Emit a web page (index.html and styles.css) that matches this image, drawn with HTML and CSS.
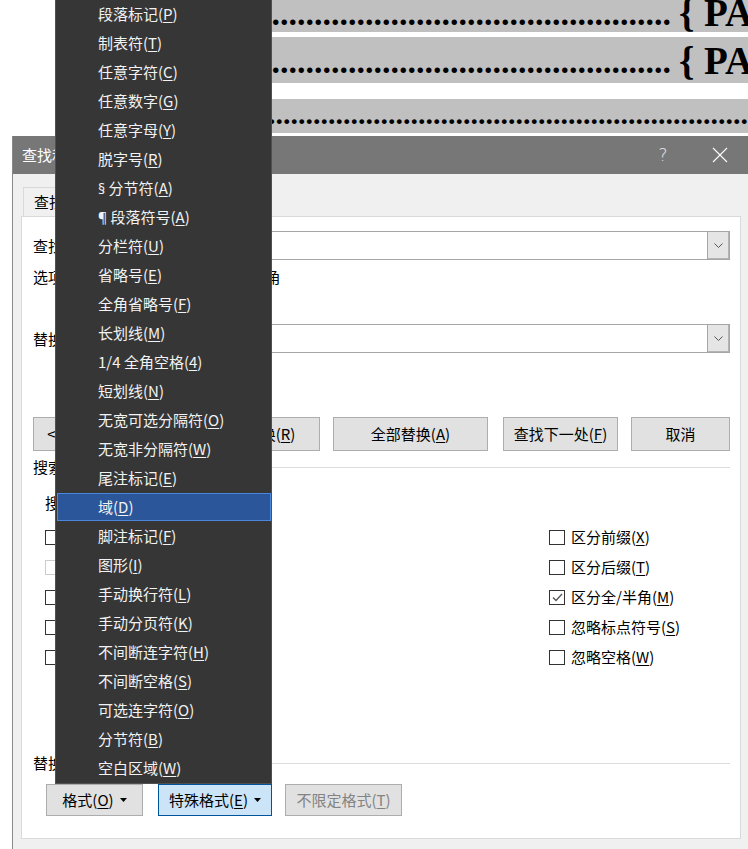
FILE: index.html
```html
<!DOCTYPE html>
<html lang="zh-CN">
<head>
<meta charset="utf-8">
<title>查找和替换</title>
<link rel="stylesheet" href="styles.css">
</head>
<body>
<div class="doc">
  <div class="toc toc1"><span class="leader">..................................................................................................................................</span><span class="tail">{ PAGEREF _Toc }</span></div>
  <div class="toc toc2"><span class="leader">..................................................................................................................................</span><span class="tail">{ PAGEREF _Toc }</span></div>
  <div class="toc toc3"><span class="leader">..................................................................................................................................</span></div>
</div>

<div class="dialog">
  <div class="titlebar">
    <span class="title">查找和替换</span>
    <span class="help">?</span>
    <span class="close"><svg width="16" height="16" viewBox="0 0 16 16"><path d="M1 1 L15 15 M15 1 L1 15" stroke="#fff" stroke-width="1.1" fill="none"/></svg></span>
  </div>
  <div class="body">
    <div class="tabs">
      <div class="tab">查找(<u>D</u>)</div>
      <div class="tab sel">替换(<u>P</u>)</div>
      <div class="tab">定位(<u>G</u>)</div>
    </div>
    <div class="panel">
      <div class="frow find">
        <span class="flabel">查找内容(<u>N</u>):</span>
        <div class="combo"><div class="drop"><svg width="9" height="5" viewBox="0 0 9 5"><polyline points="0.5,0.5 4.5,4.5 8.5,0.5" stroke="#555" fill="none"/></svg></div></div>
      </div>
      <div class="opts"><span class="flabel">选项:</span><span>向下搜索, 区分全/半角</span></div>
      <div class="frow repl">
        <span class="flabel">替换为(<u>I</u>):</span>
        <div class="combo"><div class="drop"><svg width="9" height="5" viewBox="0 0 9 5"><polyline points="0.5,0.5 4.5,4.5 8.5,0.5" stroke="#555" fill="none"/></svg></div></div>
      </div>
      <div class="btnrow">
        <div class="btn b-less">&lt;&lt; 更少(<u>L</u>)</div>
        <div class="spacer"></div>
        <div class="btn b-rep">替换(<u>R</u>)</div>
        <div class="btn b-all">全部替换(<u>A</u>)</div>
        <div class="btn b-next">查找下一处(<u>F</u>)</div>
        <div class="btn b-cancel">取消</div>
      </div>
      <div class="group g-search"><span>搜索选项</span><span class="line"></span></div>
      <div class="srow"><span>搜索:</span><div class="sel-box">全部</div></div>
      <div class="checks">
        <div class="chk"><span class="box"></span><span>区分大小写(<u>H</u>)</span></div>
        <div class="chk"><span class="box"></span><span>区分前缀(<u>X</u>)</span></div>
        <div class="chk dis"><span class="box"></span><span>全字匹配(<u>Y</u>)</span></div>
        <div class="chk"><span class="box"></span><span>区分后缀(<u>T</u>)</span></div>
        <div class="chk"><span class="box"></span><span>使用通配符(<u>U</u>)</span></div>
        <div class="chk"><span class="box on"><svg width="13" height="13" viewBox="0 0 13 13"><polyline points="2,6.5 5,9.5 11,3" stroke="#555" stroke-width="1.3" fill="none"/></svg></span><span>区分全/半角(<u>M</u>)</span></div>
        <div class="chk"><span class="box"></span><span>同音(英文)(<u>K</u>)</span></div>
        <div class="chk"><span class="box"></span><span>忽略标点符号(<u>S</u>)</span></div>
        <div class="chk"><span class="box"></span><span>查找单词的所有形式(英文)(<u>W</u>)</span></div>
        <div class="chk"><span class="box"></span><span>忽略空格(<u>W</u>)</span></div>
      </div>
      <div class="group g-repl"><span>替换</span><span class="line"></span></div>
      <div class="btnrow2">
        <div class="btn btn2 b-fmt">格式(<u>O</u>)<svg class="tri" width="7" height="4" viewBox="0 0 7 4"><polygon points="0,0 7,0 3.5,4" fill="#000"/></svg></div>
        <div class="btn btn2 b-spec">特殊格式(<u>E</u>)<svg class="tri" width="7" height="4" viewBox="0 0 7 4"><polygon points="0,0 7,0 3.5,4" fill="#000"/></svg></div>
        <div class="btn btn2 b-nofmt">不限定格式(<u>T</u>)</div>
      </div>
    </div>
  </div>
</div>

<div class="menu">
  <div class="mi">段落标记(<u>P</u>)</div>
  <div class="mi">制表符(<u>T</u>)</div>
  <div class="mi">任意字符(<u>C</u>)</div>
  <div class="mi">任意数字(<u>G</u>)</div>
  <div class="mi">任意字母(<u>Y</u>)</div>
  <div class="mi">脱字号(<u>R</u>)</div>
  <div class="mi"><span class="lat">§</span> 分节符(<u>A</u>)</div>
  <div class="mi"><span class="lat">¶</span> 段落符号(<u>A</u>)</div>
  <div class="mi">分栏符(<u>U</u>)</div>
  <div class="mi">省略号(<u>E</u>)</div>
  <div class="mi">全角省略号(<u>F</u>)</div>
  <div class="mi">长划线(<u>M</u>)</div>
  <div class="mi">1/4 全角空格(<u>4</u>)</div>
  <div class="mi">短划线(<u>N</u>)</div>
  <div class="mi">无宽可选分隔符(<u>O</u>)</div>
  <div class="mi">无宽非分隔符(<u>W</u>)</div>
  <div class="mi">尾注标记(<u>E</u>)</div>
  <div class="mi active">域(<u>D</u>)</div>
  <div class="mi">脚注标记(<u>F</u>)</div>
  <div class="mi">图形(<u>I</u>)</div>
  <div class="mi">手动换行符(<u>L</u>)</div>
  <div class="mi">手动分页符(<u>K</u>)</div>
  <div class="mi">不间断连字符(<u>H</u>)</div>
  <div class="mi">不间断空格(<u>S</u>)</div>
  <div class="mi">可选连字符(<u>O</u>)</div>
  <div class="mi">分节符(<u>B</u>)</div>
  <div class="mi">空白区域(<u>W</u>)</div>
</div>
</body>
</html>
```

FILE: styles.css
```css
* { box-sizing: border-box; }
html, body {
  margin: 0;
  padding: 0;
  width: 748px;
  height: 849px;
  overflow: hidden;
  background: #fff;
}
body {
  position: relative;
  font-family: "Noto Sans CJK SC", "Noto Sans", sans-serif;
  font-size: 15px;
  line-height: 20px;
  color: #000;
}
u {
  text-decoration: underline;
  text-decoration-thickness: 1px;
  text-underline-offset: 2px;
}

/* document behind */
.doc { padding-left: 150px; }
.toc {
  display: flex;
  background: #c0c0c0;
  font-family: "Liberation Serif", serif;
  font-weight: bold;
  font-size: 34px;
  white-space: nowrap;
  overflow: hidden;
  color: #000;
}
.toc1 { height: 32px; line-height: 27px; }
.toc2 { height: 46px; line-height: 49px; margin-top: 5px; }
.toc3 { height: 34px; line-height: 30px; margin-top: 16px; font-size: 30px; }
.leader { flex: 1; overflow: hidden; direction: rtl; }
.tail { flex: 0 0 69px; margin-left: 8px; overflow: hidden; font-size: 39px; }
.toc1 .tail { line-height: 26px; }
.toc2 .tail { line-height: 48px; }

/* dialog */
.dialog {
  position: absolute;
  left: 12px;
  top: 136px;
  width: 736px;
  height: 713px;
  background: #f0f0f0;
  border-left: 1px solid #8a8a8a;
}
.titlebar {
  height: 38px;
  background: #777;
  color: #fff;
  display: flex;
  align-items: center;
}
.title { flex: 1; padding-left: 9px; }
.help { width: 58px; text-align: center; color: #e8e8e8; font-family: "DejaVu Sans", sans-serif; font-weight: 200; font-size: 17px; }
.close { width: 56px; display: flex; justify-content: center; }

.body { padding: 13px 0 0 8px; }
.tabs { display: flex; height: 29px; align-items: flex-end; }
.tab {
  height: 29px;
  padding: 0 10px;
  border: 1px solid #d9d9d9;
  border-bottom: none;
  line-height: 28px;
  margin-left: 2px;
  background: #f0f0f0;
}
.tab.sel { background: #fff; margin-left: -1px; }
.tab + .tab:not(.sel) { margin-left: -1px; }

.panel {
  width: 720px;
  height: 623px;
  background: #fff;
  border: 1px solid #d9d9d9;
  padding: 0 10px 0 11px;
}
.frow { display: flex; align-items: center; height: 29px; }
.frow.find { margin-top: 14px; }
.frow.repl { margin-top: 37px; }
.flabel { width: 99px; flex: 0 0 99px; }
.combo {
  flex: 1;
  height: 29px;
  border: 1px solid #a6a6a6;
  display: flex;
  justify-content: flex-end;
}
.drop {
  width: 22px;
  background: #e5e5e5;
  border-left: 1px solid #a6a6a6;
  box-shadow: inset -1px -1px 0 #b4b4b4;
  display: flex;
  align-items: center;
  justify-content: center;
}
.opts { display: flex; height: 20px; margin-top: 7px; }

.btnrow { display: flex; height: 34px; margin-top: 64px; }
.btn {
  height: 34px;
  background: #e1e1e1;
  border: 1px solid #adadad;
  display: flex;
  align-items: center;
  justify-content: center;
  white-space: nowrap;
}
.spacer { flex: 1; }
.b-less { width: 97px; }
.b-rep { width: 99px; }
.b-all { width: 155px; margin-left: 13px; }
.b-next { width: 115px; margin-left: 15px; }
.b-cancel { width: 99px; margin-left: 13px; }

.group { display: flex; align-items: center; height: 20px; }
.group .line { flex: 1; height: 1px; background: #dcdcdc; margin-left: 7px; }
.g-search { margin-top: 6px; }
.g-repl { margin-top: 81px; }

.srow {
  display: flex;
  align-items: center;
  height: 26px;
  margin-top: 13px;
  padding-left: 12px;
}
.sel-box {
  margin-left: 10px;
  width: 110px;
  height: 26px;
  border: 1px solid #a6a6a6;
  padding-left: 4px;
  line-height: 24px;
}

.checks {
  display: grid;
  grid-template-columns: 504px auto;
  grid-auto-rows: 30px;
  margin-top: 6px;
  padding-left: 12px;
}
.chk { display: flex; align-items: center; white-space: nowrap; }
.box {
  width: 16px;
  height: 15px;
  border: 1px solid #333;
  margin-right: 6px;
  flex: 0 0 auto;
  display: flex;
  align-items: center;
  justify-content: center;
}
.chk.dis .box { border-color: #cccccc; }
.chk.dis { color: #8d8d8d; }

.btnrow2 { display: flex; margin-top: 11px; padding-left: 13px; }
.btn2 { height: 32px; }
.b-fmt { width: 97px; }
.b-spec { width: 114px; margin-left: 15px; background: #cce4f7; border-color: #005499; }
.b-nofmt { width: 117px; margin-left: 13px; color: #838383; }
.tri { margin-left: 6px; }

/* popup menu */
.menu {
  position: absolute;
  left: 55px;
  top: -1px;
  width: 217px;
  background: #363636;
  border: 1px solid #505050;
  color: #f2f2f2;
}
.mi {
  height: 29px;
  line-height: 28px;
  padding-left: 42px;
  white-space: nowrap;
}
.mi.active {
  height: 28px;
  line-height: 26px;
  margin: 0 0 1px 1px;
  padding-left: 40px;
  background: #2b579a;
  border: 1px solid #4a87dc;
}
.lat { font-family: "Noto Sans", sans-serif; font-size: 14px; }
```
